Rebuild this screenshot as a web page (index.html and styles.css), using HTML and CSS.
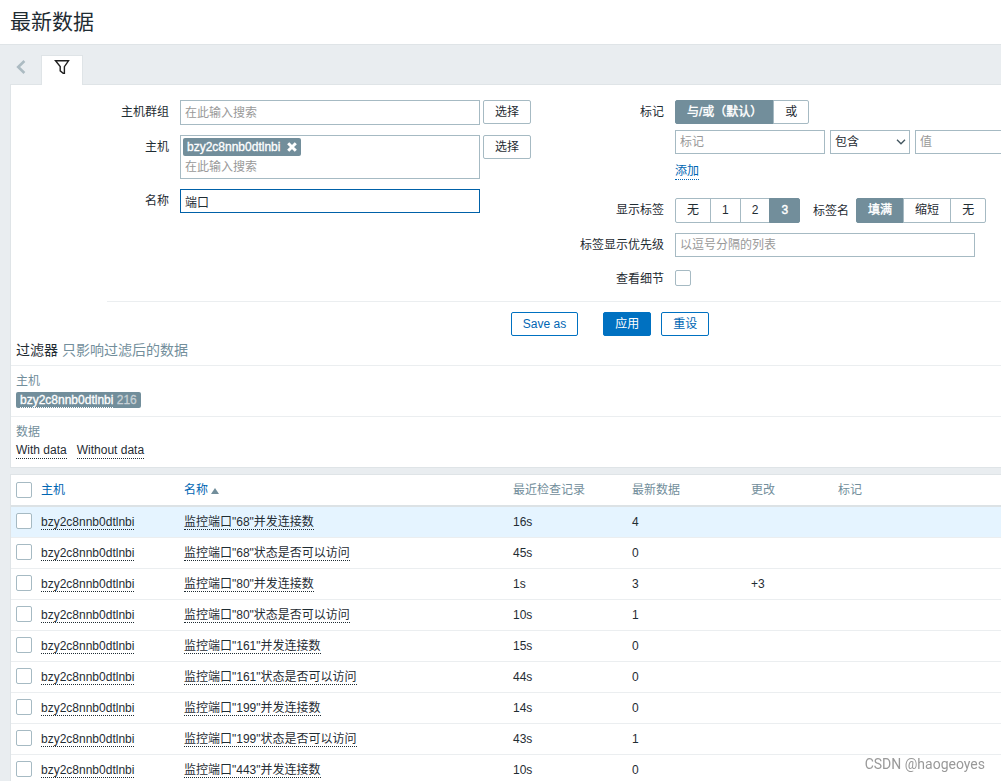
FILE: index.html
```html
<!DOCTYPE html>
<html lang="zh-CN">
<head>
<meta charset="utf-8">
<title>最新数据</title>
<link rel="stylesheet" href="styles.css">
</head>
<body>
<header class="page-header"><h1>最新数据</h1></header>
<main>
  <nav class="tabs" aria-label="过滤器">
    <button class="tab-prev" type="button" aria-label="上一个"><svg width="10" height="14" viewBox="0 0 10 14"><path d="M8.4 1 2.2 7l6.2 6" fill="none" stroke="#acbbc2" stroke-width="2.6"/></svg></button>
    <button class="tab-active" type="button" aria-label="过滤"><svg width="16" height="16" viewBox="0 0 16 16"><path d="M1.5 1.8h13L10.4 7.6v6.6H9.2L6.2 11.8V7.6Z" fill="none" stroke="#1f1f1f" stroke-width="1.4"/></svg></button>
  </nav>

  <section class="panel">
    <form class="filter">
      <div class="filter-columns">
        <div class="fields fields-left">
          <label class="label" for="groups">主机群组</label>
          <div class="picker">
            <div class="multiselect"><input id="groups" type="text" placeholder="在此输入搜索"></div>
            <button class="btn btn-grey" type="button">选择</button>
          </div>
          <label class="label" for="hosts">主机</label>
          <div class="picker">
            <div class="multiselect">
              <span class="chip">bzy2c8nnb0dtlnbi<button type="button" aria-label="移除"><svg width="10" height="10" viewBox="0 0 10 10"><path d="M1.2 1.2 8.8 8.8M8.8 1.2 1.2 8.8" stroke="#fff" stroke-width="3"/></svg></button></span>
              <input id="hosts" type="text" placeholder="在此输入搜索">
            </div>
            <button class="btn btn-grey" type="button">选择</button>
          </div>
          <label class="label" for="name">名称</label>
          <input class="text name-input" id="name" type="text" value="端口">
        </div>

        <div class="fields fields-right">
          <span class="label">标记</span>
          <div class="tags">
            <div class="segments" role="radiogroup" aria-label="标记">
              <label><input type="radio" name="evaltype" checked><span>与/或（默认）</span></label>
              <label><input type="radio" name="evaltype"><span>或</span></label>
            </div>
            <div class="tag-row">
              <input class="text" type="text" placeholder="标记" aria-label="标记">
              <div class="select">
                <select aria-label="运算符"><option>包含</option></select>
                <svg width="10" height="6" viewBox="0 0 10 6"><path d="M1 .8 5 4.8 9 .8" fill="none" stroke="#41545e" stroke-width="1.3"/></svg>
              </div>
              <input class="text" type="text" placeholder="值" aria-label="值">
            </div>
            <a class="add" href="#">添加</a>
          </div>

          <span class="label">显示标签</span>
          <div class="segment-row">
            <div class="segments" role="radiogroup" aria-label="显示标签">
              <label><input type="radio" name="show"><span>无</span></label>
              <label><input type="radio" name="show"><span>1</span></label>
              <label><input type="radio" name="show"><span>2</span></label>
              <label><input type="radio" name="show" checked><span>3</span></label>
            </div>
            <span class="inline-label">标签名</span>
            <div class="segments" role="radiogroup" aria-label="标签名">
              <label><input type="radio" name="format" checked><span>填满</span></label>
              <label><input type="radio" name="format"><span>缩短</span></label>
              <label><input type="radio" name="format"><span>无</span></label>
            </div>
          </div>

          <label class="label" for="priority">标签显示优先级</label>
          <input class="text priority" id="priority" type="text" placeholder="以逗号分隔的列表">

          <label class="label" for="details">查看细节</label>
          <div class="check-line"><input class="check" id="details" type="checkbox"></div>
        </div>
      </div>
      <div class="actions">
        <button class="btn save" type="button">Save as</button>
        <button class="btn btn-primary" type="button">应用</button>
        <button class="btn" type="button">重设</button>
      </div>
    </form>

    <h2 class="sub-title">过滤器 <span>只影响过滤后的数据</span></h2>
    <div class="subfilter">
      <h3>主机</h3>
      <span class="host-tag"><a href="#">bzy2c8nnb0dtlnbi</a> <sup>216</sup></span>
    </div>
    <div class="subfilter">
      <h3>数据</h3>
      <div class="data-links"><a class="dotted" href="#">With data</a><a class="dotted" href="#">Without data</a></div>
    </div>
  </section>

  <section class="panel table-panel">
    <table>
      <colgroup><col class="c-check"><col class="c-host"><col class="c-name"><col class="c-time"><col class="c-time"><col class="c-change"><col></colgroup>
      <thead><tr>
        <th><input class="check" type="checkbox" aria-label="全选"></th>
        <th><a href="#">主机</a></th>
        <th><a href="#">名称<i class="sort"></i></a></th>
        <th>最近检查记录</th><th>最新数据</th><th>更改</th><th>标记</th>
      </tr></thead>
      <tbody>
        <tr class="hovered"><td><input class="check" type="checkbox" aria-label="选择"></td><td><a class="dotted" href="#">bzy2c8nnb0dtlnbi</a></td><td><a class="dotted" href="#">监控端口"68"并发连接数</a></td><td>16s</td><td>4</td><td></td><td></td></tr>
        <tr><td><input class="check" type="checkbox" aria-label="选择"></td><td><a class="dotted" href="#">bzy2c8nnb0dtlnbi</a></td><td><a class="dotted" href="#">监控端口"68"状态是否可以访问</a></td><td>45s</td><td>0</td><td></td><td></td></tr>
        <tr><td><input class="check" type="checkbox" aria-label="选择"></td><td><a class="dotted" href="#">bzy2c8nnb0dtlnbi</a></td><td><a class="dotted" href="#">监控端口"80"并发连接数</a></td><td>1s</td><td>3</td><td>+3</td><td></td></tr>
        <tr><td><input class="check" type="checkbox" aria-label="选择"></td><td><a class="dotted" href="#">bzy2c8nnb0dtlnbi</a></td><td><a class="dotted" href="#">监控端口"80"状态是否可以访问</a></td><td>10s</td><td>1</td><td></td><td></td></tr>
        <tr><td><input class="check" type="checkbox" aria-label="选择"></td><td><a class="dotted" href="#">bzy2c8nnb0dtlnbi</a></td><td><a class="dotted" href="#">监控端口"161"并发连接数</a></td><td>15s</td><td>0</td><td></td><td></td></tr>
        <tr><td><input class="check" type="checkbox" aria-label="选择"></td><td><a class="dotted" href="#">bzy2c8nnb0dtlnbi</a></td><td><a class="dotted" href="#">监控端口"161"状态是否可以访问</a></td><td>44s</td><td>0</td><td></td><td></td></tr>
        <tr><td><input class="check" type="checkbox" aria-label="选择"></td><td><a class="dotted" href="#">bzy2c8nnb0dtlnbi</a></td><td><a class="dotted" href="#">监控端口"199"并发连接数</a></td><td>14s</td><td>0</td><td></td><td></td></tr>
        <tr><td><input class="check" type="checkbox" aria-label="选择"></td><td><a class="dotted" href="#">bzy2c8nnb0dtlnbi</a></td><td><a class="dotted" href="#">监控端口"199"状态是否可以访问</a></td><td>43s</td><td>1</td><td></td><td></td></tr>
        <tr><td><input class="check" type="checkbox" aria-label="选择"></td><td><a class="dotted" href="#">bzy2c8nnb0dtlnbi</a></td><td><a class="dotted" href="#">监控端口"443"并发连接数</a></td><td>10s</td><td>0</td><td></td><td></td></tr>
      </tbody>
    </table>
  </section>
</main>
<div class="watermark">CSDN @haogeoyes</div>
</body>
</html>
```

FILE: styles.css
```css
* { box-sizing: border-box; }

html { overflow: hidden; }

body {
  margin: 0;
  background: #e9edf0;
  color: #1f2c33;
  font: 12px/16px "Liberation Sans", "Noto Sans CJK SC", sans-serif;
}

button, input, select { font: inherit; color: inherit; margin: 0; }
button { cursor: pointer; }
::placeholder { color: #999; opacity: 1; }
h1, h2, h3 { margin: 0; font-weight: normal; }
a { color: #0066b3; text-decoration: none; }

.page-header {
  padding: 8px 10px;
  background: #fff;
  border-bottom: 1px solid #dfe4e7;
}
.page-header h1 { font-size: 21px; line-height: 28px; }

main { padding-left: 10px; }

/* Tabs */
.tabs { display: flex; padding-top: 10px; }
.tabs button {
  display: flex;
  align-items: center;
  justify-content: center;
  height: 30px;
  padding: 0;
  border: 0;
  background: none;
}
.tabs .tab-prev { width: 31px; height: 24px; padding-right: 9px; }
.tabs .tab-active {
  z-index: 1;
  width: 42px;
  margin-bottom: -1px;
  padding-bottom: 7px;
  background: #fff;
  border: 1px solid #dfe4e7;
  border-bottom: 0;
}

.panel {
  overflow: hidden;
  background: #fff;
  border: 1px solid #dfe4e7;
  border-right: 0;
}

/* Filter form */
.filter { min-width: 1006px; margin: 0 96px; }
.filter-columns {
  display: flex;
  gap: 49px;
  padding: 15px 0 10px;
  border-bottom: 1px solid #ebeef0;
}
.fields {
  display: grid;
  column-gap: 11px;
  row-gap: 10px;
  align-content: start;
  align-items: start;
}
.fields-left { grid-template-columns: 62px 351px; }
.fields-right { grid-template-columns: 84px auto; }
.label { line-height: 24px; text-align: right; white-space: nowrap; }

.text {
  width: 150px;
  height: 24px;
  padding: 0 4px;
  border: 1px solid #a6bac3;
  background: #fff;
}
.name-input, .priority { width: 300px; }
.name-input { border-color: #0061a8; outline: 0; }

.picker { display: flex; align-items: flex-start; gap: 3px; }
.multiselect {
  display: flex;
  flex-direction: column;
  align-items: flex-start;
  gap: 1px;
  width: 300px;
  padding: 2px;
  border: 1px solid #a6bac3;
}
.multiselect input {
  width: 100%;
  height: 19px;
  padding: 0 2px;
  border: 0;
  outline: 0;
}
.chip {
  display: flex;
  align-items: center;
  gap: 7px;
  height: 18px;
  padding: 0 4px;
  border-radius: 2px;
  background: #728e9b;
  color: #fff;
  -webkit-text-stroke: 0.3px #fff;
}
.chip button { display: flex; padding: 0; border: 0; background: none; }

.btn {
  height: 24px;
  padding: 0 11px;
  border: 1px solid #0071c1;
  border-radius: 2px;
  background: #fff;
  color: #0066b3;
  line-height: 22px;
  white-space: nowrap;
}
.btn-grey { border-color: #a6bac3; color: #1f2c33; }
.btn-primary { background: #0071c1; color: #fff; }

.segments { display: flex; }
.segments label { display: block; }
.segments label + label { margin-left: -1px; }
.segments input { position: absolute; opacity: 0; }
.segments span {
  display: block;
  padding: 0 11px;
  border: 1px solid #a6bac3;
  line-height: 22px;
  white-space: nowrap;
}
.segments label:first-child span { border-radius: 2px 0 0 2px; }
.segments label:last-child span { border-radius: 0 2px 2px 0; }
.segments input:checked + span {
  background: #728e9b;
  border-color: #728e9b;
  color: #fff;
  -webkit-text-stroke: 0.4px #fff;
}
.segment-row { display: flex; align-items: center; }
.segment-row .segments span { line-height: 23px; }
.inline-label { padding: 0 7px 0 13px; white-space: nowrap; }

.tags { padding-bottom: 8px; }
.tag-row { display: flex; gap: 5px; padding: 6px 0 9px; }
.select { position: relative; }
.select select {
  display: block;
  width: 80px;
  height: 24px;
  padding: 0 4px;
  appearance: none;
  border: 1px solid #a6bac3;
  border-radius: 0;
  background: #fff;
}
.select svg { position: absolute; right: 4px; top: 9px; pointer-events: none; }
.add, .dotted { border-bottom: 1px dotted currentColor; }
.add { display: inline-block; }
.dotted { color: inherit; }

.check {
  display: block;
  width: 16px;
  height: 16px;
  appearance: none;
  border: 1px solid #a6bac3;
  border-radius: 2px;
  background: #fff;
}
.check-line { padding-top: 3px; }

.actions { display: flex; justify-content: center; gap: 10px; padding: 10px 0 5px; }
.save { margin-right: 15px; }

/* Subfilter */
.sub-title { padding: 0 5px 6px; font-size: 14px; line-height: 18px; }
.sub-title span, .subfilter h3 { color: #728e9b; }
.subfilter { padding: 7px 5px 8px; border-top: 1px solid #ebeef0; }
.subfilter h3 { font-size: 12px; line-height: 16px; }
.host-tag {
  display: block;
  width: fit-content;
  margin-top: 3px;
  padding: 0 4px;
  border-radius: 2px;
  background: #728e9b;
  color: #fff;
  line-height: 16px;
  -webkit-text-stroke: 0.3px currentColor;
}
.host-tag a { color: #fff; border-bottom: 1px dotted #fff; }
.host-tag sup { font-size: 12px; line-height: 1; vertical-align: baseline; color: #c8d1d6; }
.data-links { display: flex; gap: 10px; margin-top: 3px; }
.data-links a { line-height: 15px; }

/* Data table */
.table-panel { margin-top: 6px; }
table { width: 100%; table-layout: fixed; border-collapse: collapse; }
th, td { height: 31px; padding: 0; text-align: left; font-weight: normal; vertical-align: middle; white-space: nowrap; }
th { color: #728e9b; border-bottom: 2px solid #dce2e5; }
td { border-bottom: 1px solid #ebeef0; }
th:first-child, td:first-child { padding-left: 5px; }
td .check { margin-bottom: 2px; }
th .check { margin-bottom: 1px; }
.c-check { width: 30px; }
.c-host { width: 143px; }
.c-name { width: 329px; }
.c-time { width: 119px; }
.c-change { width: 87px; }
.hovered { background: #e5f4ff; }
.sort {
  display: inline-block;
  margin-left: 3px;
  border: 4px solid transparent;
  border-top: 0;
  border-bottom: 6px solid #728e9b;
}

.watermark {
  position: fixed;
  right: 16px;
  bottom: 8px;
  color: #999;
  font: 14px/18px Roboto, "Liberation Sans", sans-serif;
}
```
